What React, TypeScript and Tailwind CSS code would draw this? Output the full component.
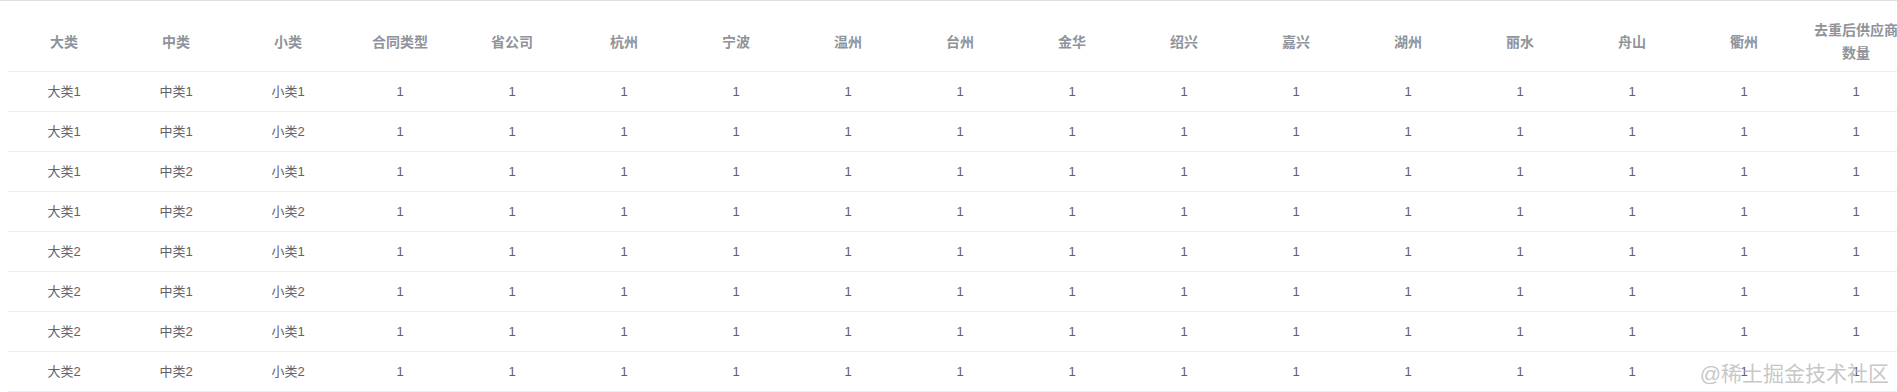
import React from 'react';

const headers = [
  '大类', '中类', '小类', '合同类型', '省公司', '杭州', '宁波', '温州', '台州',
  '金华', '绍兴', '嘉兴', '湖州', '丽水', '舟山', '衢州', '去重后供应商数量',
];

const rows: string[][] = [];
for (const a of ['1', '2']) {
  for (const b of ['1', '2']) {
    for (const c of ['1', '2']) {
      rows.push([`大类${a}`, `中类${b}`, `小类${c}`, ...Array(14).fill('1')]);
    }
  }
}

export default function App() {
  return (
    <div
      className="relative w-full h-[392px] overflow-hidden bg-white border-t border-[#e0e0e0] pl-2 pt-[12px]"
      style={{ fontFamily: '"Liberation Sans", "Noto Sans CJK SC", sans-serif' }}
    >
      <table className="table-fixed border-collapse w-[1904px]">
        <colgroup>
          {headers.map((h) => (
            <col key={h} className="w-[112px]" />
          ))}
        </colgroup>
        <thead>
          <tr>
            {headers.map((h) => (
              <th
                key={h}
                className="px-[10px] py-[6px] text-center text-[14px] leading-[23px] font-bold text-[#909399] border-b border-[#ebeef5]"
              >
                {h}
              </th>
            ))}
          </tr>
        </thead>
        <tbody>
          {rows.map((r, i) => (
            <tr key={i}>
              {r.map((v, j) => (
                <td
                  key={j}
                  className="px-[10px] py-[8px] text-center text-[13px] leading-[23px] text-[#606266] border-b border-[#ebeef5]"
                >
                  {v}
                </td>
              ))}
            </tr>
          ))}
        </tbody>
      </table>
      <div className="absolute right-[8px] top-[360px] text-[21px] leading-[25px] text-[#b8b8b8]/80 pointer-events-none">
        @稀土掘金技术社区
      </div>
    </div>
  );
}
